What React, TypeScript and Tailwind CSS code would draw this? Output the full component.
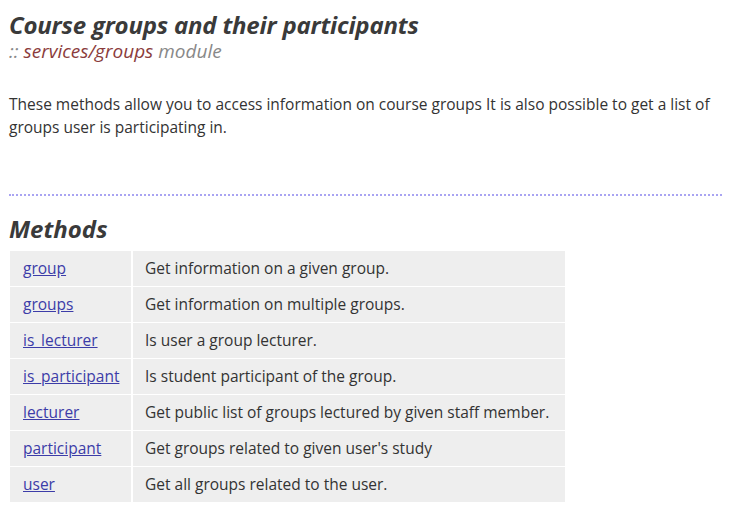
export default function App() {
  const rows: [string, string][] = [
    ["group", "Get information on a given group."],
    ["groups", "Get information on multiple groups."],
    ["is_lecturer", "Is user a group lecturer."],
    ["is_participant", "Is student participant of the group."],
    ["lecturer", "Get public list of groups lectured by given staff member."],
    ["participant", "Get groups related to given user's study"],
    ["user", "Get all groups related to the user."],
  ];
  return (
    <div className="bg-white min-h-[520px] px-[9px] pt-[11px] text-[#333]" style={{ fontFamily: '"Segoe UI", "Open Sans", sans-serif' }}>
      <h1 className="text-[24px] font-bold italic leading-[28px] text-[#3a3a3a] tracking-[-0.2px]">Course groups and their participants</h1>
      <div className="mt-[1px] text-[19px] italic leading-[22px] text-[#888]">
        :: <span className="text-[#8b3c3c]">services/groups</span> module
      </div>
      <p className="mt-[31px] text-[15.5px] leading-[23px] text-[#333]">
        These methods allow you to access information on course groups It is also possible to get a list of groups user is participating in.
      </p>
      <div className="mt-[55px] mr-[4px] border-b-2 border-dotted border-[#a9a4f2]" />
      <h2 className="mt-[19px] text-[24px] font-bold italic leading-[28px] text-[#3a3a3a]">Methods</h2>
      <div className="mt-[8px] ml-[1px] flex w-[555px] flex-col gap-[1px] text-[15.5px]">
        {rows.map(([n, d]) => (
          <div key={n} className="flex h-[35px] gap-[2px]">
            <div className="flex w-[121px] items-center bg-[#eeeeee] px-[13px]">
              <a href="#" className="text-[#3c3ca8] underline">{n}</a>
            </div>
            <div className="flex flex-1 items-center bg-[#eeeeee] px-[12px] text-[#333]">{d}</div>
          </div>
        ))}
      </div>
    </div>
  );
}
